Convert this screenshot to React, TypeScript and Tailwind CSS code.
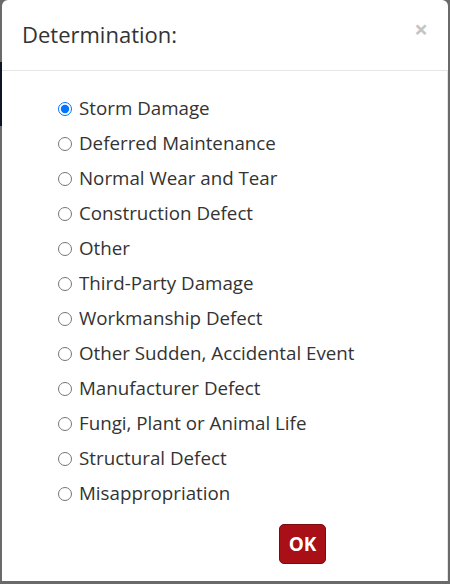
import React from "react";

const options = [
  "Storm Damage",
  "Deferred Maintenance",
  "Normal Wear and Tear",
  "Construction Defect",
  "Other",
  "Third-Party Damage",
  "Workmanship Defect",
  "Other Sudden, Accidental Event",
  "Manufacturer Defect",
  "Fungi, Plant or Animal Life",
  "Structural Defect",
  "Misappropriation",
];

export default function App() {
  return (
    <div
      className="w-[450px] h-[584px] bg-[#6a6a6a] overflow-hidden relative"
      style={{ fontFamily: '"Open Sans", "Noto Sans", sans-serif' }}
    >
      <div className="absolute left-0 top-[62px] w-[2px] h-[64px] bg-[#0d1428]" />
      <div className="ml-[2px] w-[446px] h-[581px] bg-white rounded-t-[6px] flex flex-col">
        <div className="h-[71px] border-b border-[#e5e5e5] flex items-start justify-between pl-[20px] pr-[20px]">
          <div className="mt-[19px] text-[22px] leading-[30px] text-[#333]">Determination:</div>
          <div className="mt-[14px] text-[24px] font-bold leading-[30px] text-[#c4c4c4]">×</div>
        </div>
        <div className="flex-1 border-r border-[#e5e5e5] flex flex-col">
          <div className="pl-[56px] pt-[20px] flex flex-col">
            {options.map((o, i) => (
              <label key={o} className="h-[35px] flex items-center gap-[7px] text-[18.75px] text-[#333]">
                <input
                  type="radio"
                  name="det"
                  defaultChecked={i === 0}
                  className="w-[14px] h-[14px] m-0"
                />
                <span>{o}</span>
              </label>
            ))}
          </div>
          <div className="mt-[13px] pl-[277px]">
            <button className="w-[47px] h-[40px] bg-[#a80f16] border border-[#7a0a0f] rounded-[5px] text-white font-bold text-[19px] leading-none">
              OK
            </button>
          </div>
        </div>
      </div>
    </div>
  );
}
